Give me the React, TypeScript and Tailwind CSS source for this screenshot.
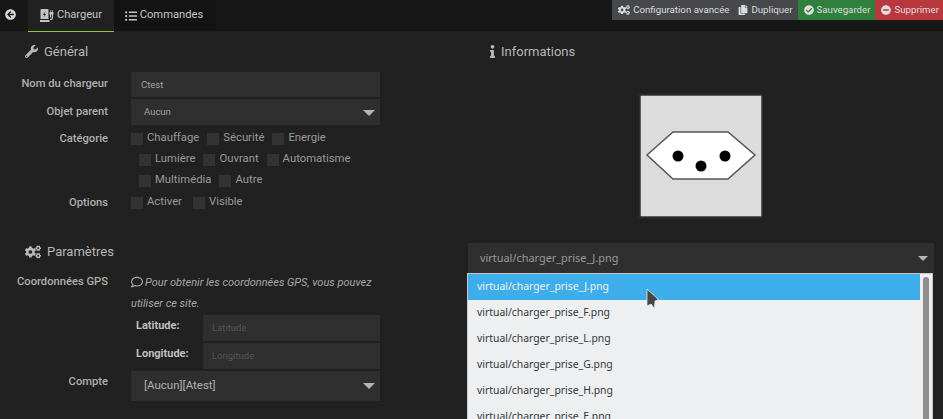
import React from "react";
import { FaArrowCircleLeft, FaCheckCircle, FaCogs, FaCopy, FaInfo, FaListUl, FaMinusCircle, FaRegComment, FaWrench } from "react-icons/fa";

const sans = "font-['Roboto',sans-serif]";

const ChargerIcon = () => (
	<svg width="14" height="13" viewBox="0 0 14 13" fill="currentColor">
		<path d="M1.5 0h6a1 1 0 0 1 1 1v9h-8V1a1 1 0 0 1 1-1zM0 11h9.500v2H0z" />
		<path d="M5.500 2 3 6h1.500L3.500 8.500 6 5H4.500z" fill="#1a1a1a" />
		<path d="M10 8.500V5.500H9.500V3h.8V1h.7v2h1V1h.7v2h.8v2.500H13V9a2 2 0 0 1-2 2h-1V9.800h1a.8.8 0 0 0 .8-.8V5.500H11v3z" />
	</svg>
);

const Check = ({ label }: { label: string }) => (
	<div className="flex items-center h-[21px]">
		<div className="w-3 h-3 bg-[#333333] mr-[4px]" />
		<span className="text-[11.3px] text-[#9a9a9a]">{label}</span>
	</div>
);

const Row: React.FC<{ label: string; className?: string; labelClass?: string; children: React.ReactNode }> = ({ label, className, labelClass, children }) => (
	<div className={"flex " + (className ?? "")}>
		<div className={"w-[108px] shrink-0 text-right text-[11.2px] font-medium text-[#b0b0b0] " + (labelClass ?? "")}>{label}</div>
		<div className="ml-[23px] flex-1">{children}</div>
	</div>
);

const Arrow = () => (
	<div className="w-0 h-0 border-x-[6px] border-x-transparent border-t-[6px] border-t-[#b5b5b5]" />
);

const files = ["J", "F", "L", "G", "H", "E"];

export default function App() {
	return (
		<div className={"relative w-[943px] h-[419px] overflow-hidden bg-[#212121] " + sans}>
			<div className="flex justify-between h-[31px] bg-[#171717]">
				<div className="flex">
					<div className="w-[28px] flex items-start pt-[9px] pl-[5px] text-[#d8d8d8]">
						<FaArrowCircleLeft size={11} />
					</div>
					<div className="w-[86px] h-[32px] bg-[#212121] border-b border-[#8cc63f] flex items-center justify-center gap-[3px] text-[11.1px] text-[#c4c4c4]">
						<ChargerIcon />
						Chargeur
					</div>
					<div className="w-[102px] pr-[2px] bg-[#131313] flex items-center justify-center gap-[3px] text-[11.2px] text-[#c4c4c4]">
						<FaListUl size={12} />
						Commandes
					</div>
				</div>
				<div className="flex h-[20px] text-[9.7px] text-[#dddddd]">
					<div className="flex items-center gap-[3px] pl-[6px] pr-[3px] bg-[#46484b]">
						<FaCogs size={12} />
						Configuration avancée
					</div>
					<div className="flex items-center gap-[3px] pl-[6px] pr-[5px] bg-[#46484b]">
						<FaCopy size={10} />
						Dupliquer
					</div>
					<div className="flex items-center gap-[3px] pl-[6px] pr-[5px] bg-[#2f7f3d]">
						<FaCheckCircle size={10} />
						Sauvegarder
					</div>
					<div className="flex items-center gap-[3px] pl-[6px] pr-[4px] bg-[#b9383e]">
						<FaMinusCircle size={10} />
						Supprimer
					</div>
				</div>
			</div>

			<div className="flex">
				<div className="w-[380px] shrink-0">
					<div className="flex items-center gap-[6px] h-[41px] pl-[25px] text-[13px] text-[#b8b8b8]">
						<FaWrench size={13} />
						Général
					</div>
					<Row label="Nom du chargeur" labelClass="pt-[4px]">
						<div className="h-[25px] bg-[#2f2f2f] pl-[10px] pt-px flex items-center text-[9.5px] text-[#a0a0a0]">Ctest</div>
					</Row>
					<Row label="Objet parent" className="mt-[2px]" labelClass="pt-[5px]">
						<div className="h-[26px] bg-[#2f2f2f] pl-[13px] pr-[5px] pt-px flex items-center justify-between text-[9.5px] text-[#a0a0a0]">
							Aucun
							<Arrow />
						</div>
					</Row>
					<Row label="Catégorie" className="mt-[3px] pt-[3px]">
						<div className="flex gap-[8px] -mt-[3px]">
							<Check label="Chauffage" />
							<Check label="Sécurité" />
							<Check label="Energie" />
						</div>
						<div className="flex gap-[8px] pl-[8px]">
							<Check label="Lumière" />
							<Check label="Ouvrant" />
							<Check label="Automatisme" />
						</div>
						<div className="flex gap-[8px] pl-[8px]">
							<Check label="Multimédia" />
							<Check label="Autre" />
						</div>
					</Row>
					<Row label="Options" className="pt-[3px] mt-px">
						<div className="flex gap-[11px] -mt-[3px]">
							<Check label="Activer" />
							<Check label="Visible" />
						</div>
					</Row>
					<div className="flex items-center gap-[6px] mt-[29px] h-[20px] pl-[25px] text-[13px] text-[#b8b8b8]">
						<FaCogs size={16} />
						Paramètres
					</div>
					<Row label="Coordonnées GPS" className="mt-[12px]">
						<div className="text-[11px] italic leading-[21px] text-[#a8a8a8] -mt-[2px]">
							<FaRegComment size={12} className="inline mr-[2px] align-[-2px]" />
							Pour obtenir les coordonnées GPS, vous pouvez utiliser ce site.
						</div>
						<div className="flex mt-[1px]">
							<div className="w-[72px] pl-[5px] pt-[3px] text-[11px] font-bold text-[#c0c0c0]">Latitude:</div>
							<div className="flex-1 h-[26px] bg-[#2f2f2f] pl-[9px] flex items-center text-[9.5px] text-[#555555]">Latitude</div>
						</div>
						<div className="flex mt-[2px]">
							<div className="w-[72px] pl-[5px] pt-[3px] text-[11px] font-bold text-[#c0c0c0]">Longitude:</div>
							<div className="flex-1 h-[26px] bg-[#2f2f2f] pl-[9px] flex items-center text-[9.5px] text-[#555555]">Longitude</div>
						</div>
					</Row>
					<Row label="Compte" className="mt-[2px]" labelClass="pt-[3px]">
						<div className="h-[30px] bg-[#2f2f2f] pl-[13px] pr-[5px] flex items-center justify-between text-[11.5px] text-[#b0b0b0]">
							[Aucun][Atest]
							<Arrow />
						</div>
					</Row>
				</div>

				<div className="ml-[88px] w-[466px] shrink-0">
					<div className="flex items-center gap-[2px] h-[41px] pl-[18px] text-[13px] text-[#b8b8b8]">
						<FaInfo size={13} />
						Informations
					</div>
					<div className="flex justify-center mt-[22px]">
						<svg width="124" height="124" viewBox="0 0 124 124">
							<rect x="1" y="1" width="122" height="122" fill="#dcdcdc" stroke="#333333" strokeWidth="1.5" />
							<polygon points="8,61 34,38 89,38 116,61 89,85 34,85" fill="#ffffff" stroke="#555555" strokeWidth="1.5" />
							<circle cx="39" cy="62" r="5.5" fill="#000000" />
							<circle cx="86" cy="62" r="5.5" fill="#000000" />
							<circle cx="62" cy="72" r="5.5" fill="#000000" />
						</svg>
					</div>
					<div className="relative mt-[25px] h-[30px] bg-[#2f2f2f] pl-[12px] pr-[6px] flex items-center justify-between font-['Noto_Sans',sans-serif] text-[10.9px] text-[#9a9a9a]">
						virtual/charger_prise_J.png
						<div className="w-0 h-0 border-x-[5px] border-x-transparent border-t-[5px] border-t-[#b5b5b5]" />
						<div className="absolute -left-px top-[30px] w-[466px] h-[160px] bg-[#eeeff1] border border-[#c8c8c8] flex text-[10.4px] text-[#31363b]">
							<div className="w-[452px]">
								{files.map((f, i) => (
									<div key={f} className={"h-[26px] pl-[9px] flex items-center " + (i === 0 ? "bg-[#3daee9] text-[#eff0f1]" : "")}>
										{"virtual/charger_prise_" + f + ".png"}
									</div>
								))}
							</div>
							<div className="ml-[3px] mt-[3px] w-[6px] rounded-t-[3px] bg-[#8f8f8f]" />
						</div>
					</div>
				</div>
			</div>

			<svg className="absolute left-[646px] top-[288px]" width="14" height="22" viewBox="0 0 14 22">
				<path d="M1 1 12.500 11.500 9 13 8.500 20.500 5 16 1 18Z" fill="#454545" stroke="#e8e8e8" strokeWidth="0.8" />
			</svg>
		</div>
	);
}
